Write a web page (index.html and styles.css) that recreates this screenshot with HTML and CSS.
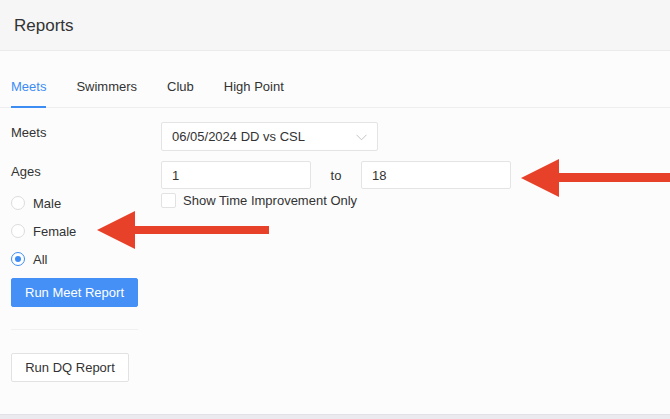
FILE: index.html
```html
<!DOCTYPE html>
<html>
<head>
<meta charset="utf-8">
<link rel="stylesheet" href="styles.css">
</head>
<body>
<header class="header">
  <h1 class="title">Reports</h1>
</header>
<main class="main">
  <nav class="tabs">
    <span class="tab active">Meets</span>
    <span class="tab">Swimmers</span>
    <span class="tab">Club</span>
    <span class="tab">High Point</span>
  </nav>
  <section class="form">
    <div class="left">
      <div class="label label-meets">Meets</div>
      <div class="label">Ages</div>
      <div class="radios">
        <label class="radio"><span class="dot"></span>Male</label>
        <label class="radio"><span class="dot"></span>Female</label>
        <label class="radio checked"><span class="dot"></span>All</label>
      </div>
      <button class="btn btn-primary">Run Meet Report</button>
      <div class="divider"></div>
      <button class="btn btn-default">Run DQ Report</button>
    </div>
    <div class="right">
      <div class="select">
        <span>06/05/2024 DD vs CSL</span>
        <svg class="chev" width="11" height="7" viewBox="0 0 11 7"><path d="M0.5 0.8 L5.5 5.8 L10.5 0.8" fill="none" stroke="#c4c4c4" stroke-width="1"/></svg>
      </div>
      <div class="range">
        <div class="input">1</div>
        <span class="to">to</span>
        <div class="input">18</div>
      </div>
      <label class="check"><span class="box"></span>Show Time Improvement Only</label>
    </div>
  </section>
  <svg class="arrow arrow-right" width="150" height="40" viewBox="0 0 150 40">
    <polygon points="0,19 38,0 38,14 150,14 150,23 38,23 38,38" fill="#e8412a"/>
  </svg>
  <svg class="arrow arrow-left" width="173" height="40" viewBox="0 0 173 40">
    <polygon points="0,19 38,0 38,15 172,15 172,23 38,23 38,38" fill="#e8412a"/>
  </svg>
</main>
<div class="footer"></div>
</body>
</html>
```

FILE: styles.css
```css
* { box-sizing: border-box; }
html, body { margin: 0; padding: 0; }
body {
  font-family: "Liberation Sans", Arial, sans-serif;
  color: #333;
  font-size: 13px;
  background: #fcfcfc;
  width: 670px;
  height: 419px;
  overflow: hidden;
  display: flex;
  flex-direction: column;
}
.header {
  height: 51px;
  background: #f6f6f6;
  border-bottom: 1px solid #ebebeb;
  padding-left: 14px;
  display: flex;
  align-items: center;
}
.title {
  margin: 2px 0 0 0;
  font-size: 17px;
  font-weight: normal;
  color: #333;
}
.main {
  position: relative;
  flex: 1;
  background: #fcfcfc;
}
.tabs {
  display: flex;
  gap: 30px;
  padding-left: 11px;
  height: 57px;
  border-bottom: 1px solid #eeeeee;
  align-items: flex-end;
}
.tab {
  line-height: 16px;
  padding-bottom: 11px;
  border-bottom: 2px solid transparent;
  margin-bottom: -1px;
}
.tab.active {
  color: #3d8cf4;
  border-bottom-color: #3d8cf4;
}
.form {
  display: flex;
  padding: 14px 0 0 11px;
}
.left {
  width: 150px;
  display: flex;
  flex-direction: column;
  align-items: flex-start;
}
.label {
  line-height: 20px;
  height: 20px;
  margin-top: 1px;
}
.label-meets { margin-bottom: 18px; }
.radios {
  margin-top: 7px;
  display: flex;
  flex-direction: column;
}
.radio {
  height: 28px;
  display: flex;
  align-items: center;
  gap: 8px;
}
.dot {
  width: 14px;
  height: 14px;
  border-radius: 50%;
  border: 1px solid #dcdcdc;
  background: #fff;
  position: relative;
}
.radio.checked .dot {
  border-color: #3d8cf4;
}
.radio.checked .dot::after {
  content: "";
  position: absolute;
  left: 3px;
  top: 3px;
  width: 6px;
  height: 6px;
  border-radius: 50%;
  background: #3d8cf4;
}
.btn {
  font-family: inherit;
  font-size: 13px;
  height: 29px;
  border-radius: 2px;
  cursor: pointer;
}
.btn-primary {
  margin-top: 5px;
  width: 127px;
  background: #4590f6;
  border: 1px solid #4590f6;
  color: #fff;
}
.btn-default {
  width: 118px;
  background: #fff;
  border: 1px solid #e2e2e2;
  color: #333;
}
.divider {
  width: 127px;
  height: 1px;
  background: #f0f0f0;
  margin: 22px 0 23px;
}
.right {
  display: flex;
  flex-direction: column;
  align-items: flex-start;
}
.select {
  width: 217px;
  height: 29px;
  background: #fff;
  border: 1px solid #e4e4e4;
  border-radius: 2px;
  padding: 0 10px;
  display: flex;
  align-items: center;
  justify-content: space-between;
}
.chev { margin-top: 1px; }
.range {
  display: flex;
  align-items: center;
  margin-top: 10px;
}
.input {
  width: 150px;
  height: 28px;
  background: #fff;
  border: 1px solid #e4e4e4;
  border-radius: 2px;
  padding: 0 10px;
  display: flex;
  align-items: center;
}
.to {
  width: 50px;
  text-align: center;
}
.check {
  display: flex;
  align-items: center;
  gap: 7px;
  margin-top: 3px;
  height: 16px;
}
.box {
  width: 15px;
  height: 15px;
  background: #fff;
  border: 1px solid #e2e2e2;
  border-radius: 2px;
}
.arrow { position: absolute; }
.arrow-right { left: 521px; top: 108px; }
.arrow-left { left: 97px; top: 160px; }
.footer {
  height: 5px;
  background: #ebebef;
  border-top: 1px solid #e2e2e6;
}
```
